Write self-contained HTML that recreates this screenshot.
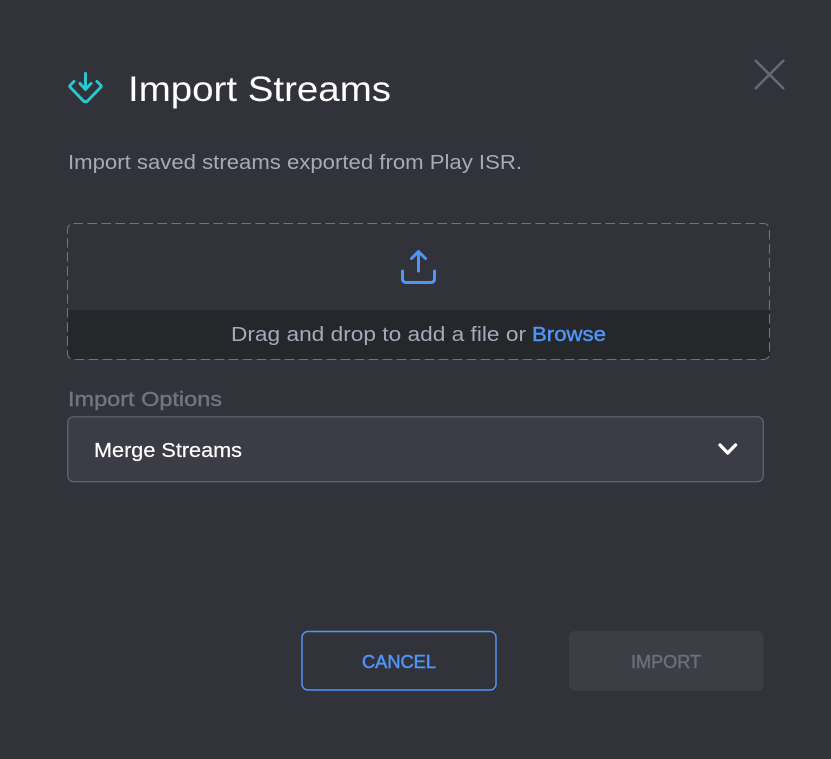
<!DOCTYPE html>
<html lang="en">
<head>
<meta charset="utf-8">
<title>Import Streams</title>
<style>
html,body{margin:0;padding:0;width:831px;height:759px;overflow:hidden;background:#32333a}
svg{display:block}
text{font-family:"Liberation Sans",sans-serif}
</style>
</head>
<body>
<svg width="831" height="759" viewBox="0 0 831 759" xmlns="http://www.w3.org/2000/svg">
  <rect width="831" height="759" fill="#32333a"/>

  <!-- Header icon -->
  <g fill="none" stroke="#2bc7ce" stroke-width="3" stroke-linecap="round" stroke-linejoin="round">
    <path d="M85.500 73.500V89"/>
    <path d="M80 83.500L85.500 89.500L91 83.500"/>
    <path d="M74 81.500L70 85.500Q69.500 86.500 70.500 87.500L83.500 101Q85.500 102.500 87.500 101L100.500 87.500Q101.500 86.500 101 85.500L97 81.500"/>
  </g>
  <text x="128" y="101" font-size="35" fill="#ffffff" textLength="263" lengthAdjust="spacingAndGlyphs">Import Streams</text>

  <!-- Close -->
  <path d="M755 60L784 89M784 60L755 89" fill="none" stroke="#666777" stroke-width="2.600"/>

  <text x="68" y="169" font-size="20" fill="#a8a8b8" textLength="454" lengthAdjust="spacingAndGlyphs">Import saved streams exported from Play ISR.</text>

  <!-- Dropzone -->
  <path d="M68 310H770V353Q770 359 764 359H74Q68 359 68 353Z" fill="#26272b"/>
  <rect x="67.500" y="223.500" width="702" height="136" rx="6" ry="6" fill="none" stroke="#72727f" stroke-width="1.100" stroke-dasharray="9.500 4.500"/>
  <g fill="none" stroke="#4f95f8" stroke-width="3" stroke-linecap="round" stroke-linejoin="round">
    <path d="M418.500 252V271"/>
    <path d="M411.500 258.500L418.500 251.500L425.500 258.500"/>
    <path d="M402.500 271V278.500Q402.500 282.500 406.500 282.500H430.500Q434.500 282.500 434.500 278.500V271"/>
  </g>
  <text x="231" y="341" font-size="20" fill="#a8a8b8" textLength="295" lengthAdjust="spacingAndGlyphs">Drag and drop to add a file or</text>
  <text x="532" y="341" font-size="20" fill="#4f95f8" stroke="#4f95f8" stroke-width=".4" textLength="74" lengthAdjust="spacingAndGlyphs">Browse</text>

  <!-- Select -->
  <text x="68" y="406" font-size="20" fill="#74747f" stroke="#74747f" stroke-width=".4" textLength="154" lengthAdjust="spacingAndGlyphs">Import Options</text>
  <rect x="67.750" y="416.750" width="695.500" height="65" rx="6" ry="6" fill="#3c3c47" stroke="#636370" stroke-width="1.300"/>
  <text x="94" y="457" font-size="20" fill="#ffffff" stroke="#ffffff" stroke-width=".2" textLength="148" lengthAdjust="spacingAndGlyphs">Merge Streams</text>
  <path d="M720 445L727.700 453L735.500 445" fill="none" stroke="#ffffff" stroke-width="3.400" stroke-linecap="round" stroke-linejoin="round"/>

  <!-- Buttons -->
  <rect x="302" y="631.500" width="194" height="58.500" rx="6" ry="6" fill="none" stroke="#4f95f8" stroke-width="1.500"/>
  <text x="362" y="668" font-size="18" fill="#4f95f8" stroke="#4f95f8" stroke-width=".5" textLength="74" lengthAdjust="spacingAndGlyphs">CANCEL</text>
  <rect x="569" y="631" width="194.500" height="60" rx="6" ry="6" fill="#3c3d45"/>
  <text x="631" y="668" font-size="18" fill="#6d6d79" stroke="#6d6d79" stroke-width=".5" textLength="70" lengthAdjust="spacingAndGlyphs">IMPORT</text>
</svg>
</body>
</html>
